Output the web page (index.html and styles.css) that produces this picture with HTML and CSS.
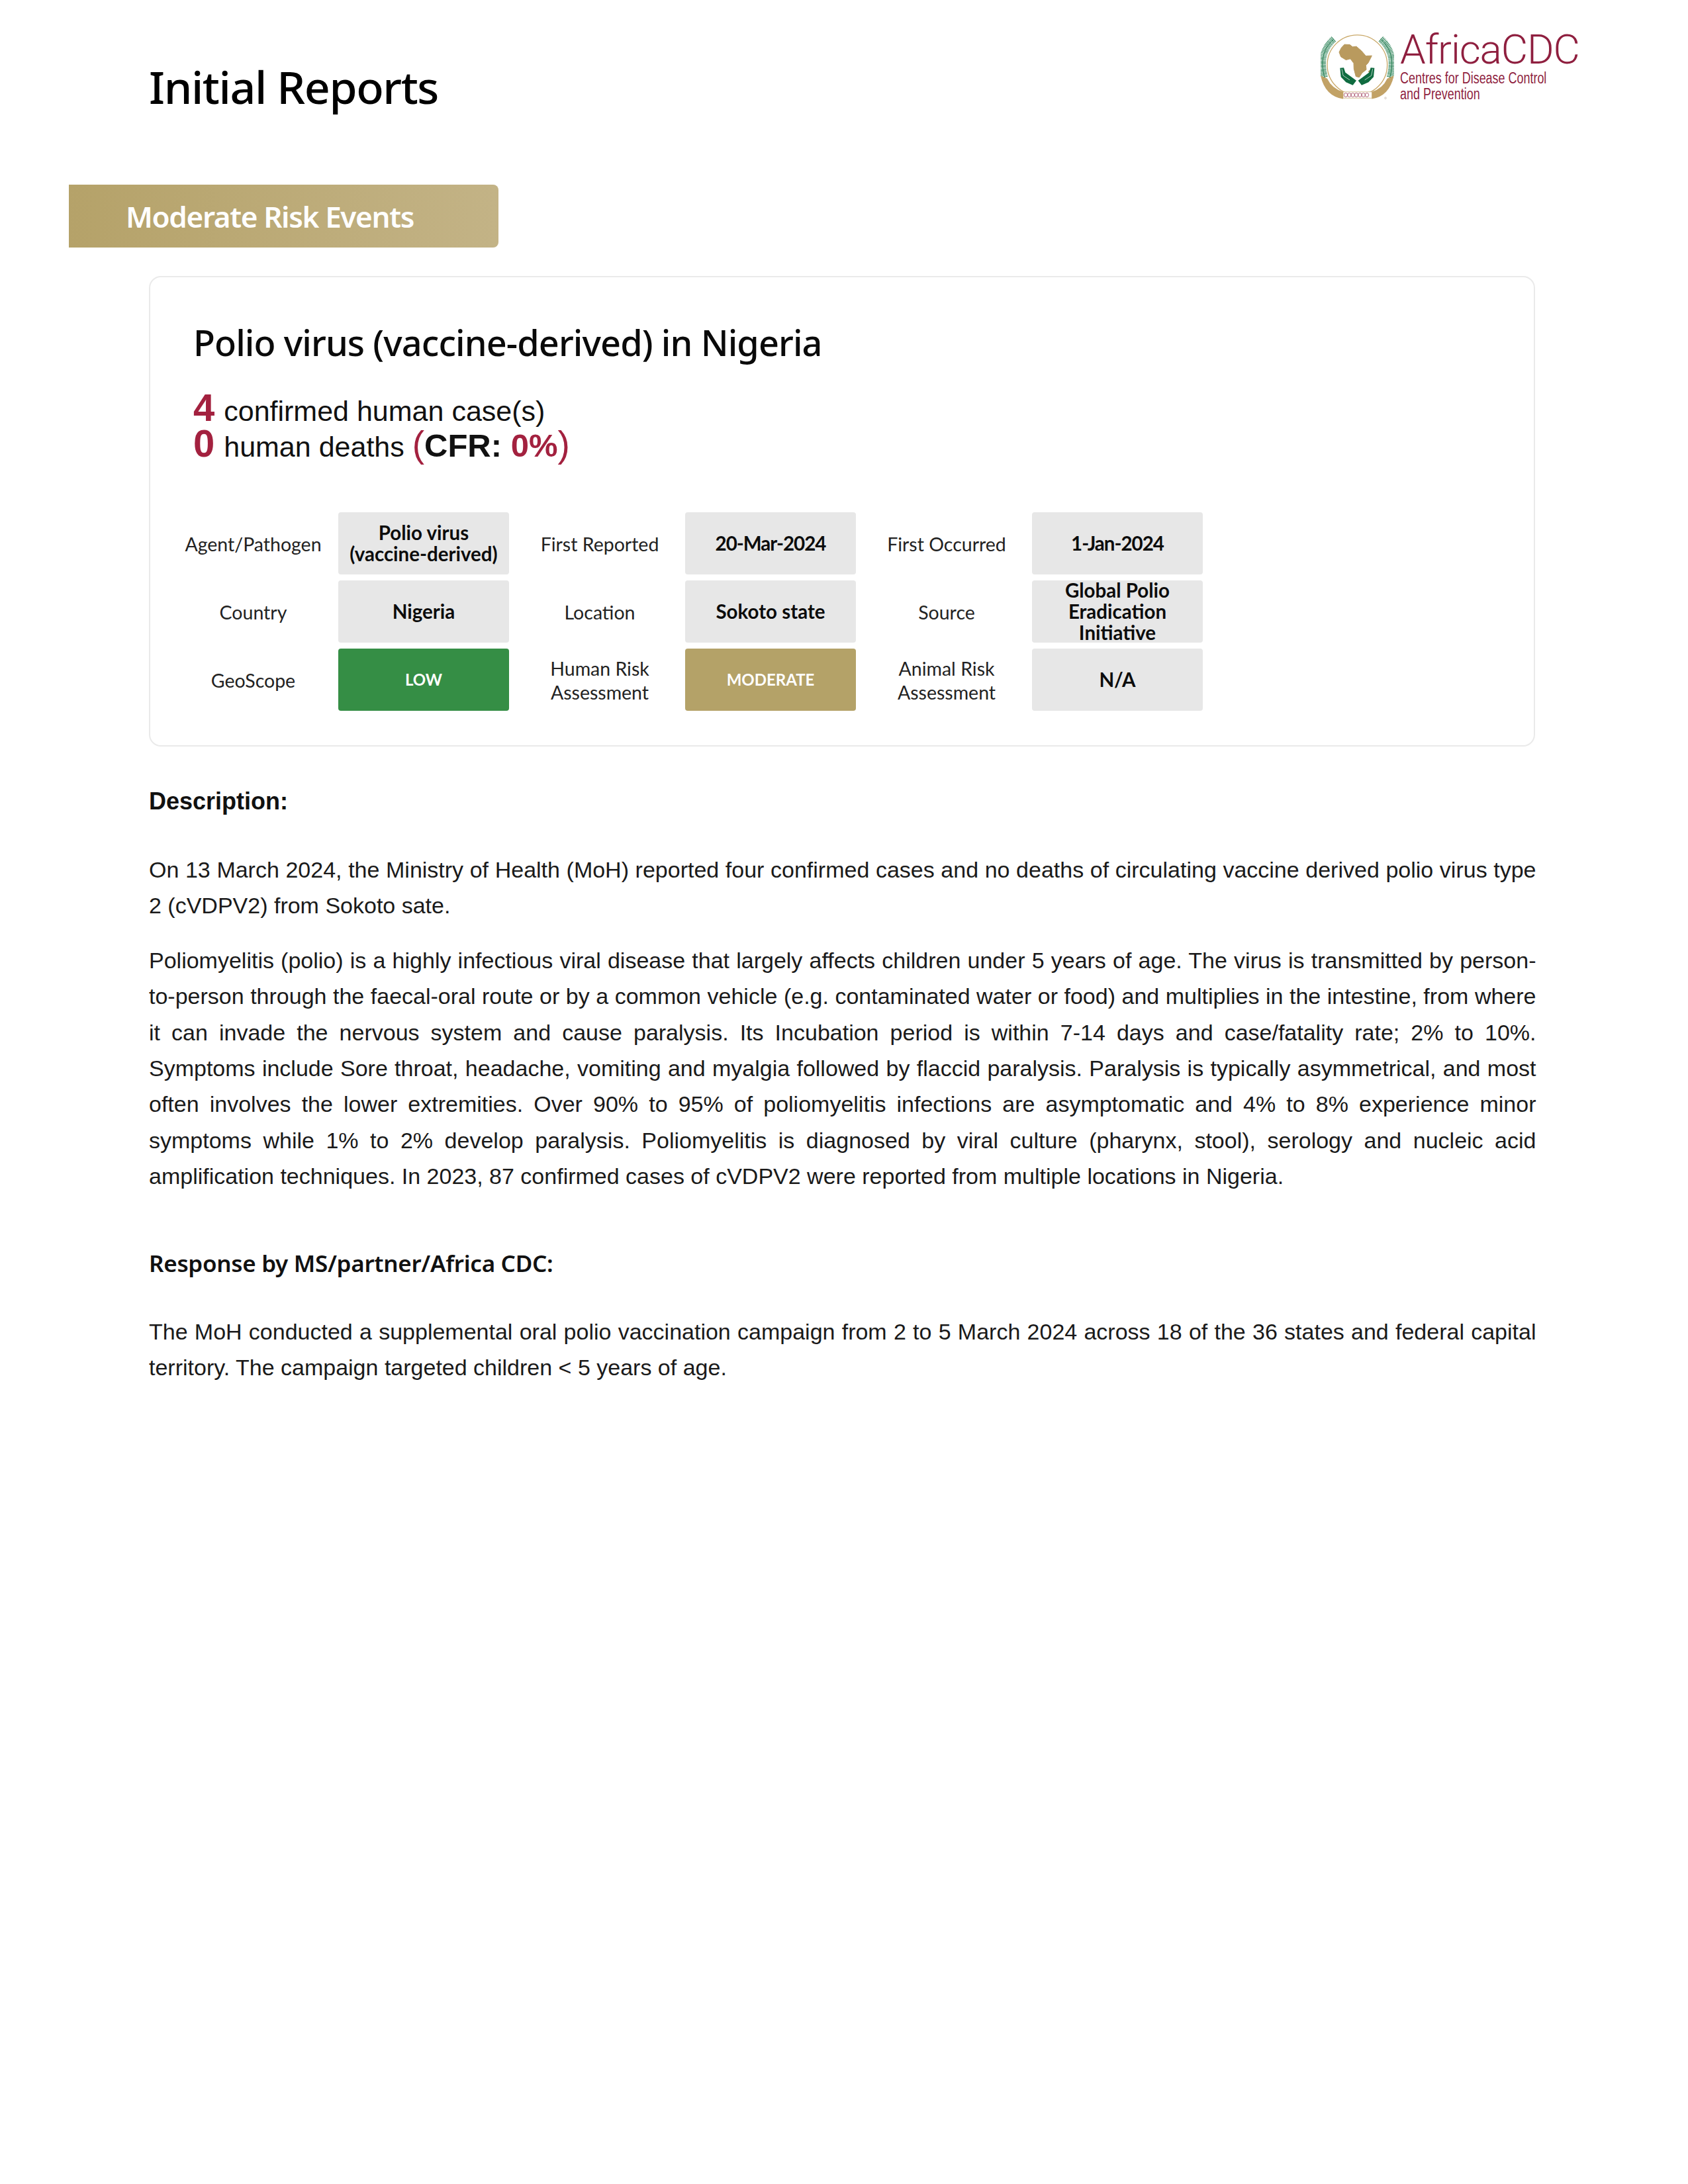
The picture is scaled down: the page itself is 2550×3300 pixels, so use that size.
FILE: index.html
```html
<!DOCTYPE html>
<html lang="en">
<head>
<meta charset="utf-8">
<title>Initial Reports</title>
<link rel="stylesheet" href="styles.css">
</head>
<body>
<div class="page">
  <header class="top">
    <h1 class="page-title">Initial Reports</h1>
    <div class="logo">
      <svg class="emblem" viewBox="130 96 333 296" aria-hidden="true">
        <circle cx="296" cy="234" r="136" fill="none" stroke="#c9a868" stroke-width="4"/>
        <g class="wreath">
          <path d="M148 290 C128 220 140 160 190 116"/>
          <path d="M444 290 C464 220 452 160 402 116"/>
        </g>
        <g fill="none" stroke="#1d7a4c" stroke-width="3">
          <path d="M148 290 C128 220 140 160 190 116"/>
          <path d="M444 290 C464 220 452 160 402 116"/>
        </g>
        <path class="africa" d="M238 141 L262 142 L275 152 L292 150 L315 170 L335 193 L362 192 L346 224 L335 236 L337 255 L318 270 L305 290 L290 286 L281 252 L280 226 L265 206 L245 211 L222 197 L214 176 L224 156 Z"/>
        <path fill="#b99a5e" d="M345 262 L362 252 L352 275 Z"/>
        <path fill="#0f6b40" d="M218 248 L235 246 L242 268 L292 305 L276 326 L245 312 L222 288 Z"/>
        <path fill="#0f6b40" d="M374 248 L357 246 L350 268 L300 305 L316 326 L347 312 L370 288 Z"/>
        <g fill="none" stroke="#fff" stroke-width="2">
          <path d="M226 252 L232 282 L262 302"/>
          <path d="M366 252 L360 282 L330 302"/>
        </g>
        <path fill="#c2a266" d="M130 282 L160 296 Q180 340 232 356 L232 388 Q150 375 130 282 Z"/>
        <path fill="#c2a266" d="M462 282 L432 296 Q412 340 362 356 L362 388 Q442 375 462 282 Z"/>
        <rect x="232" y="356" width="130" height="28" fill="#fff" stroke="#c2a266" stroke-width="2"/>
        <g fill="none" stroke="#8f1f3f" stroke-width="2">
          <ellipse cx="244" cy="370" rx="8" ry="9"/><ellipse cx="260" cy="370" rx="8" ry="9"/>
          <ellipse cx="276" cy="370" rx="8" ry="9"/><ellipse cx="292" cy="370" rx="8" ry="9"/>
          <ellipse cx="308" cy="370" rx="8" ry="9"/><ellipse cx="324" cy="370" rx="8" ry="9"/>
          <ellipse cx="340" cy="370" rx="8" ry="9"/>
        </g>
        <circle cx="424" cy="384" r="4" fill="none" stroke="#a98" stroke-width="1.5"/>
      </svg>
      <div class="logo-text">
        <div class="logo-name">AfricaCDC</div>
        <div class="logo-sub">Centres for Disease Control<br>and Prevention</div>
      </div>
    </div>
  </header>

  <div class="banner">Moderate Risk Events</div>

  <section class="card">
    <h2 class="event-title">Polio virus (vaccine-derived) in Nigeria</h2>
    <div class="stats">
      <div class="stat"><span class="num">4</span> confirmed human case(s)</div>
      <div class="stat"><span class="num">0</span> human deaths <span class="paren">(</span><b>CFR: </b><span class="pct">0%</span><span class="paren">)</span></div>
    </div>
    <div class="facts">
      <div class="label">Agent/Pathogen</div>
      <div class="value">Polio virus<br>(vaccine-derived)</div>
      <div class="label">First Reported</div>
      <div class="value date">20-Mar-2024</div>
      <div class="label">First Occurred</div>
      <div class="value date">1-Jan-2024</div>

      <div class="label">Country</div>
      <div class="value">Nigeria</div>
      <div class="label">Location</div>
      <div class="value">Sokoto state</div>
      <div class="label">Source</div>
      <div class="value">Global Polio<br>Eradication<br>Initiative</div>

      <div class="label">GeoScope</div>
      <div class="value risk low">LOW</div>
      <div class="label">Human Risk<br>Assessment</div>
      <div class="value risk moderate">MODERATE</div>
      <div class="label">Animal Risk<br>Assessment</div>
      <div class="value">N/A</div>
    </div>
  </section>

  <h3 class="heading-desc">Description:</h3>
  <p class="para first">On 13 March 2024, the Ministry of Health (MoH) reported four confirmed cases and no deaths of circulating vaccine derived polio virus type 2 (cVDPV2) from Sokoto sate.</p>
  <p class="para">Poliomyelitis (polio) is a highly infectious viral disease that largely affects children under 5 years of age. The virus is transmitted by person-to-person through the faecal-oral route or by a common vehicle (e.g. contaminated water or food) and multiplies in the intestine, from where it can invade the nervous system and cause paralysis. Its Incubation period is within 7-14 days and case/fatality rate; 2% to 10%. Symptoms include Sore throat, headache, vomiting and myalgia followed by flaccid paralysis. Paralysis is typically asymmetrical, and most often involves the lower extremities. Over 90% to 95% of poliomyelitis infections are asymptomatic and 4% to 8% experience minor symptoms while 1% to 2% develop paralysis. Poliomyelitis is diagnosed by viral culture (pharynx, stool), serology and nucleic acid amplification techniques. In 2023, 87 confirmed cases of cVDPV2 were reported from multiple locations in Nigeria.</p>
  <h3 class="heading-resp">Response by MS/partner/Africa CDC:</h3>
  <p class="para first">The MoH conducted a supplemental oral polio vaccination campaign from 2 to 5 March 2024 across 18 of the 36 states and federal capital territory. The campaign targeted children &lt; 5 years of age.</p>
</div>
</body>
</html>
```
FILE: styles.css
```css
* { box-sizing: border-box; }
html, body { margin: 0; background: #fff; }
.page { width: 2550px; height: 3300px; padding: 0 232px 0 104px; color: #000; overflow: hidden; }

.top { display: flex; justify-content: space-between; align-items: flex-start; padding-left: 121px; height: 279px; }
.page-title { margin: 86px 0 0; font: 500 68px/90px "Noto Sans", sans-serif; letter-spacing: -1.4px; color: #000; }
.logo { display: flex; gap: 9px; margin-top: 52px; margin-right: -67px; width: 390px; }
.emblem { width: 111px; height: 99px; flex: none; }
.wreath path { fill: none; stroke: #1d7a4c; stroke-width: 30; stroke-dasharray: 3 3; }
.africa { fill: #b99a5e; stroke: #b99a5e; stroke-width: 3; stroke-linejoin: round; }
.logo-text { color: #8f1f3f; }
.logo-name { font: 300 62px/48px Roboto, sans-serif; letter-spacing: -1.1px; margin-top: -1px; white-space: nowrap; }
.logo-sub { font: 400 23px/24px "Liberation Sans", sans-serif; margin-top: 7px; white-space: nowrap; transform: scaleX(0.78); transform-origin: left center; }

.banner { width: 649px; height: 95px; padding-left: 86px; background: linear-gradient(90deg, #b5a269, #c3b386); border-radius: 0 8px 8px 0; color: #fff; font: 600 44px/97px "Noto Sans", sans-serif; letter-spacing: -1.35px; }

.card { margin: 43px 0 0 121px; width: 2094px; height: 711px; padding: 62px 0 0 19px; border: 2px solid #eaeaea; border-radius: 18px; }
.event-title { margin: 0 0 0 46px; font: 500 54px/72px "Noto Sans", sans-serif; letter-spacing: -0.9px; color: #0a0a0a; }
.stats { margin: 41px 0 0 46px; font: 400 43px/54px "Liberation Sans", sans-serif; color: #111; }
.stat { white-space: nowrap; height: 54px; }
.num { font-size: 58px; line-height: 0; font-weight: 700; color: #a3213f; margin-right: 2px; }
.stat b { font-weight: 700; font-size: 49px; line-height: 0; color: #111; }
.pct { font-size: 49px; line-height: 0; font-weight: 700; color: #a3213f; }
.paren { font-size: 55px; line-height: 0; color: #a3213f; }

.facts { margin-top: 72px; display: grid; grid-template-columns: 265px 258px 266px 258px 266px 258px; grid-auto-rows: 94px; row-gap: 9px; }
.label { display: flex; align-items: center; justify-content: center; padding-left: 8px; padding-top: 2px; text-align: center; font: 400 28.5px/36px Lato, sans-serif; color: #222; }
.value { display: flex; align-items: center; justify-content: center; text-align: center; background: #e7e7e7; border-radius: 4px; font: 700 29.5px/32px Lato, sans-serif; color: #0c0c0c; }
.date { letter-spacing: -1px; }
.risk { color: #fff; font-size: 24px; }
.low { background: #358e45; }
.moderate { background: #b4a268; }

.heading-desc { margin: 60px 0 0 121px; font: 700 36px/46px "Liberation Sans", sans-serif; color: #111; }
.heading-resp { margin: 81px 0 0 121px; font: 600 35px/46px "Noto Sans", sans-serif; letter-spacing: -0.3px; color: #111; }
.para { margin: 28px 0 0 121px; width: 2095.5px; font: 400 34px/54.4px "Liberation Sans", sans-serif; color: #1a1a1a; text-align: justify; }
.para.first { margin-top: 53px; }
```
